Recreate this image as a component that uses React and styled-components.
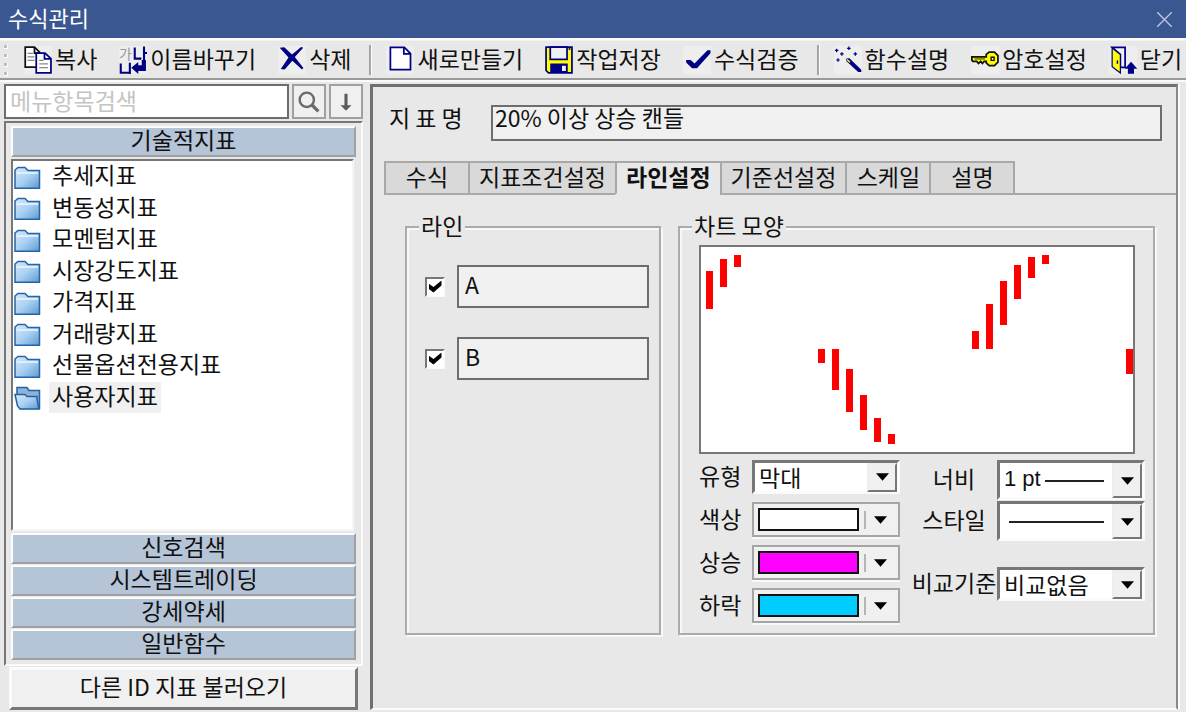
import React, { useState } from "react"
import styled, { createGlobalStyle } from "styled-components"

const GlobalStyle = createGlobalStyle`
  * {
    box-sizing: border-box;
  }
  body {
    margin: 0;
    background: #e8e8e8;
  }
  body, button, input, select {
    font-family: "Noto Sans CJK KR", "Liberation Sans", sans-serif;
    font-size: 23px;
    line-height: 28px;
    color: #111;
  }
`

const navy = "#000084"

/* toolbar icons */

const CopyIcon = () => (
  <Icon viewBox="0 0 16 16">
    <path d="M.7.7H6l3 3V12H.7z" fill="#fff" stroke="#111" />
    <path d="M6 .7V4h3" fill="none" stroke="#111" />
    <path d="M2 4.2h3M2 6.2h4M2 8.2h4" stroke="#888" strokeWidth=".7" />
    <path d="M7 4h5l3.4 3.2v8.2H7z" fill="#fff" stroke={navy} />
    <path d="M11.7 4v3.4h3.6" fill="none" stroke={navy} />
    <path d="M8.7 8.2h2.5M8.7 10.2h5M8.7 12.4h5" stroke="#888" strokeWidth=".7" />
  </Icon>
)

const RenameIcon = () => (
  <Icon viewBox="0 0 16 16">
    <text x="0" y="7.4" fontSize="8" fill="#999">가</text>
    <path d="M9 .8v6.4h3.8M14.3.3v8.4M14 4h2M1 10v5.3h4.6M6.2 9.5V16" fill="none" stroke={navy} strokeWidth="1.2" />
    <path d="M15.4 8v6.3H11V16l-4-3.6 4-3.3V11h2V8z" fill={navy} />
  </Icon>
)

const DeleteIcon = () => (
  <Icon viewBox="0 0 16 16">
    <path d="M1 1l2.6-.3 4.4 4.1L13.200.6l1.200.4L9.600 6.300l4.900 6.300-.8.8-5.500-5-4.400 5-2.200-.2L6 6.600z" fill={navy} />
  </Icon>
)

const NewIcon = () => (
  <Icon viewBox="0 0 16 16">
    <path d="M2.5.8h8L14 4.3v9.2H2.5z" fill="#fff" stroke={navy} />
    <path d="M10.2.8v3.7H14" fill="none" stroke={navy} />
  </Icon>
)

const SaveIcon = () => (
  <Icon viewBox="0 0 16 16">
    <path d="M.6.6h14.8v14.8H2L.6 14z" fill="#ff0" stroke={navy} />
    <path d="M3 .6h9.6v7H3z" fill="#f0f0f0" stroke={navy} />
    <path d="M3 10h10v5.4H3z" fill={navy} />
    <path d="M9.7 11.3h2.2v3H9.7z" fill="#f0f0f0" />
    <path d="M13.5 1.7h1" stroke={navy} />
  </Icon>
)

const CheckIcon = () => (
  <Icon viewBox="0 0 16 16">
    <path d="M1.800 8h2.600l2.200 2 7.400-7.600h1.700v1.800L8 12.700H5.200L1.800 9.400z" fill={navy} />
  </Icon>
)

const WandIcon = () => (
  <Icon viewBox="0 0 16 16">
    <path d="M7 7.2l1.8-.2 6.8 6.6v1.2h-1.8L7 8.6z" fill={navy} />
    <path d="M7.4 7.7l1.7 1.6" stroke="#ff0" strokeWidth=".9" />
    <path
      d="M.5 2.5h2M1.5 1.5v2M7.5 1.3h2M8.5.3v2M3.5 4.5h2M4.5 3.5v2M11.2 4.5h2M12.2 3.5v2M1.3 8h2M2.3 7v2"
      stroke={navy}
      strokeWidth=".7"
    />
  </Icon>
)

const KeyIcon = () => (
  <Icon viewBox="0 0 16 16">
    <path
      d="M.5 6.2h8.2V4.8l1.7-1.3h3l2 2v3.7l-2 2h-3L8.7 9.7v-.9H7.5L6.5 10l-1-1.2L4.3 10l-1-1.2H1L.5 8z"
      fill="#ff0"
      stroke="#111"
    />
    <path d="M2 7.4h6" stroke="#111" strokeWidth=".5" />
    <path d="M11.5 6.4h1.7v1.8h-1.7z" fill="#fff" stroke="#111" strokeWidth=".8" />
  </Icon>
)

const DoorIcon = () => (
  <Icon viewBox="0 0 16 16">
    <path d="M1.8.8h7.4v11.4H6.5V5L1.8.8z" fill="#f0f0f0" stroke={navy} />
    <path d="M1.8 1.2l4.7 3.6v10.6l-4.7-3.6z" fill="#ff0" stroke={navy} strokeWidth=".7" />
    <path d="M4.8 8.2v2" stroke={navy} strokeWidth=".8" />
    <path d="M12.6 9l3.6 4h-1.9v2.8h-3.5V13H9z" fill={navy} />
  </Icon>
)

const SearchIcon = () => (
  <SmallIcon viewBox="0 0 20 20">
    <circle cx="8" cy="8" r="6.5" fill="none" stroke="#6b6b6b" strokeWidth="2.2" />
    <path d="M12.5 12.5l6 6" stroke="#6b6b6b" strokeWidth="3" />
  </SmallIcon>
)

const DownIcon = () => (
  <SmallIcon viewBox="0 0 20 20">
    <path d="M8.6 2.5h2.8V13H15l-5 5-5-5h3.6z" fill="#5c5c5c" />
  </SmallIcon>
)

const FolderIcon = ({ open }) => (
  <FolderSvg viewBox="0 0 27 24">
    <defs>
      <linearGradient id="folder" x1="0" y1="0" x2="1" y2="1">
        <stop offset="0" stopColor="#d5eafc" />
        <stop offset=".5" stopColor="#a9d0f3" />
        <stop offset="1" stopColor="#5f98cf" />
      </linearGradient>
    </defs>
    {open ? (
      <>
        <path d="M3 1.500h10l2 3h10.500v18H6L3 10z" fill="#8fb2d8" stroke="#2262a3" strokeWidth="1.5" />
        <path d="M1 8.500h10l2 2h10v3l2 9.500H6L3.500 20z" fill="url(#folder)" stroke="#2262a3" strokeWidth="1.5" />
      </>
    ) : (
      <>
        <path d="M1 4l3-2.5h7l3 3h11.500v17.800H1z" fill="url(#folder)" stroke="#2465aa" strokeWidth="1.5" />
        <path d="M2.5 7h21.500" stroke="#eef7ff" strokeWidth="1.5" />
      </>
    )}
  </FolderSvg>
)

const Arrow = () => (
  <ArrowSvg viewBox="0 0 14 8">
    <path d="M0 0h14L7 8z" fill="#000" />
  </ArrowSvg>
)

const toolGroups = [
  [
    { label: "복사", icon: <CopyIcon /> },
    { label: "이름바꾸기", icon: <RenameIcon /> },
    { label: "삭제", icon: <DeleteIcon /> },
  ],
  [
    { label: "새로만들기", icon: <NewIcon /> },
    { label: "작업저장", icon: <SaveIcon /> },
    { label: "수식검증", icon: <CheckIcon /> },
  ],
  [
    { label: "함수설명", icon: <WandIcon /> },
    { label: "암호설정", icon: <KeyIcon /> },
    { label: "닫기", icon: <DoorIcon /> },
  ],
]

const folders = [
  "추세지표",
  "변동성지표",
  "모멘텀지표",
  "시장강도지표",
  "가격지표",
  "거래량지표",
  "선물옵션전용지표",
  "사용자지표",
]

const categories = ["신호검색", "시스템트레이딩", "강세약세", "일반함수"]

const tabs = ["수식", "지표조건설정", "라인설정", "기준선설정", "스케일", "설명"]

const colors = [
  { label: "색상", id: "base-color", value: "#ffffff" },
  { label: "상승", id: "up-color", value: "#ff00ff" },
  { label: "하락", id: "down-color", value: "#00ccff" },
]

// x, top, bottom
const bars = [
  [5, 24, 62],
  [19, 12, 40],
  [33, 8, 20],
  [117, 102, 116],
  [131, 102, 143],
  [145, 122, 165],
  [159, 148, 183],
  [173, 171, 195],
  [187, 187, 197],
  [271, 84, 102],
  [285, 57, 102],
  [299, 34, 78],
  [313, 18, 52],
  [327, 10, 31],
  [341, 8, 17],
  [425, 102, 127],
]

const Toolbar = () => (
  <ToolbarRow role="toolbar">
    <Grip><i /><i /><i /><i /></Grip>
    {toolGroups.map((group, i) => (
      <React.Fragment key={i}>
        {i > 0 && <Separator />}
        <ToolGroup>
          {group.map(tool => (
            <ToolButton type="button" key={tool.label}>
              {tool.icon}
              <ToolLabel>{tool.label}</ToolLabel>
            </ToolButton>
          ))}
        </ToolGroup>
      </React.Fragment>
    ))}
  </ToolbarRow>
)

const Sidebar = () => {
  const [selected, setSelected] = useState("사용자지표")
  return (
    <SidebarColumn>
      <SearchRow>
        <SearchInput type="text" placeholder="메뉴항목검색" aria-label="메뉴항목검색" />
        <SearchButton type="button" aria-label="검색"><SearchIcon /></SearchButton>
        <SearchButton type="button" aria-label="다음"><DownIcon /></SearchButton>
      </SearchRow>
      <TreePanel>
        <Category type="button">기술적지표</Category>
        <TreeBox>
          <TreeList>
            {folders.map(name => (
              <TreeItem key={name}>
                <TreeButton type="button" onClick={() => setSelected(name)}>
                  <FolderIcon open={selected === name} />
                  <TreeLabel $selected={selected === name}>{name}</TreeLabel>
                </TreeButton>
              </TreeItem>
            ))}
          </TreeList>
        </TreeBox>
        <CategoryStack>
          {categories.map(name => (
            <Category type="button" key={name}>{name}</Category>
          ))}
        </CategoryStack>
      </TreePanel>
      <LoadButton type="button">다른 ID 지표 불러오기</LoadButton>
    </SidebarColumn>
  )
}

const LineSettings = () => (
  <Group>
    <Legend>라인</Legend>
    <LineList>
      {["A", "B"].map(name => (
        <LineRow key={name}>
          <CheckBox type="checkbox" defaultChecked aria-label={name} />
          <LineName type="text" defaultValue={name} aria-label={`라인 ${name}`} />
        </LineRow>
      ))}
    </LineList>
  </Group>
)

const ChartSettings = () => (
  <Group>
    <Legend>차트 모양</Legend>
    <ChartBody>
      <Chart viewBox="0 0 432 205" preserveAspectRatio="none">
        {bars.map(([x, top, bottom]) => (
          <rect key={x} x={x} y={top} width="7" height={bottom - top} fill="#f00" />
        ))}
      </Chart>
      <Options>
        <OptionColumn>
          <OptionRow>
            <OptionLabel htmlFor="type">유형</OptionLabel>
            <SelectBox>
              <Select id="type"><option>막대</option></Select>
              <SelectArrow><Arrow /></SelectArrow>
            </SelectBox>
          </OptionRow>
          {colors.map(color => (
            <OptionRow key={color.id}>
              <OptionLabel htmlFor={color.id}>{color.label}</OptionLabel>
              <ColorButton type="button" id={color.id} aria-haspopup="listbox">
                <Swatch $color={color.value} />
                <ColorArrow><Arrow /></ColorArrow>
              </ColorButton>
            </OptionRow>
          ))}
        </OptionColumn>
        <OptionColumnRight>
          <WideRow>
            <WideLabel htmlFor="width">너비</WideLabel>
            <SelectBox $tall>
              <WidthSelect id="width"><option>1 pt</option></WidthSelect>
              <LineSample $from={48} />
              <SelectArrow><Arrow /></SelectArrow>
            </SelectBox>
          </WideRow>
          <WideRow>
            <WideLabel htmlFor="style">스타일</WideLabel>
            <SelectBox $tall>
              <Select id="style"><option value="solid" aria-label="실선"></option></Select>
              <LineSample $from={12} />
              <SelectArrow><Arrow /></SelectArrow>
            </SelectBox>
          </WideRow>
          <CompareRow>
            <WideLabel htmlFor="compare">비교기준</WideLabel>
            <SelectBox>
              <Select id="compare"><option>비교없음</option></Select>
              <SelectArrow><Arrow /></SelectArrow>
            </SelectBox>
          </CompareRow>
        </OptionColumnRight>
      </Options>
    </ChartBody>
  </Group>
)

const Editor = () => {
  const [active, setActive] = useState("라인설정")
  return (
    <EditorPanel>
      <NameRow>
        <NameLabel htmlFor="name">지 표 명</NameLabel>
        <NameInput id="name" type="text" defaultValue="20% 이상 상승 캔들" />
      </NameRow>
      <TabRow role="tablist">
        {tabs.map(tab => (
          <Tab
            key={tab}
            type="button"
            role="tab"
            aria-selected={tab === active}
            $active={tab === active}
            onClick={() => setActive(tab)}
          >
            {tab}
          </Tab>
        ))}
        <TabFill />
      </TabRow>
      <TabBody>
        <LineSettings />
        <ChartSettings />
      </TabBody>
    </EditorPanel>
  )
}

const App = () => {
  return (
    <Window>
      <GlobalStyle />
      <TitleBar>
        <Title>수식관리</Title>
        <CloseButton type="button" aria-label="닫기">
          <CloseSvg viewBox="0 0 14 14">
            <path d="M0 0l14 14M14 0L0 14" stroke="#b9c6de" strokeWidth="1.3" />
          </CloseSvg>
        </CloseButton>
      </TitleBar>
      <Toolbar />
      <Content>
        <Sidebar />
        <Editor />
      </Content>
    </Window>
  )
}

export default App

const Window = styled.div`
  display: flex;
  flex-direction: column;
  min-height: 100vh;
  background: #e8e8e8;
`

const TitleBar = styled.header`
  display: flex;
  align-items: center;
  justify-content: space-between;
  height: 38px;
  padding: 0 14px 0 8px;
  background: #3a5791;
`

const Title = styled.h1`
  margin: 0;
  padding-bottom: 4px;
  font-size: 22px;
  font-weight: 400;
  color: #fff;
`

const CloseButton = styled.button`
  display: flex;
  padding: 0;
  border: 0;
  background: none;
`

const CloseSvg = styled.svg`
  width: 15px;
  height: 15px;
`

const ToolbarRow = styled.div`
  display: flex;
  align-items: center;
  height: 44px;
  padding-left: 4px;
  border-top: 2px solid #fafafa;
  border-bottom: 2px solid #fafafa;
  box-shadow: inset 0 -2px 0 #9a9a9a, inset 0 1px 0 #f2f2f2;
  overflow: hidden;
`

const Grip = styled.span`
  display: flex;
  flex-direction: column;
  gap: 5px;
  width: 20px;

  i {
    width: 4px;
    height: 4px;
    background: #bdbdbd;
    border-right: 1px solid #fff;
    border-bottom: 1px solid #fff;
  }
`

const ToolGroup = styled.div`
  display: flex;
  gap: 22px;
`

const ToolButton = styled.button`
  display: flex;
  align-items: center;
  gap: 3px;
  padding: 0;
  border: 0;
  background: none;
  white-space: nowrap;
`

const ToolLabel = styled.span`
  padding-bottom: 4px;
`

const Icon = styled.svg`
  width: 28px;
  height: 28px;
  flex: none;
  background: #eee;
  overflow: visible;
`

const SmallIcon = styled.svg`
  width: 22px;
  height: 22px;
`

const Separator = styled.span`
  width: 3px;
  height: 30px;
  margin: 0 14px 0 18px;
  border-left: 2px solid #a5a5a5;
  border-right: 1px solid #fff;
`

const Content = styled.main`
  display: grid;
  grid-template-columns: 363px minmax(0, 1fr);
  gap: 7px;
  flex: 1;
  padding: 2px 6px 2px 0;
`

const SidebarColumn = styled.aside`
  display: flex;
  flex-direction: column;
  padding-left: 4px;
`

const SearchRow = styled.div`
  display: flex;
  gap: 3px;
  height: 35px;
  margin-bottom: 2px;
`

const SearchInput = styled.input`
  flex: 1;
  min-width: 0;
  padding: 0 4px 4px 4px;
  border: 2px solid #6d6d6d;
  background: #fff;

  &::placeholder {
    color: #c4c4c4;
    opacity: 1;
  }
`

const SearchButton = styled.button`
  display: flex;
  align-items: center;
  justify-content: center;
  width: 34px;
  padding: 0;
  border: 2px solid #a0a0a0;
  background: #f0f0f0;
`

const TreePanel = styled.section`
  display: flex;
  flex-direction: column;
  flex: 1;
  padding: 3px 5px 4px 5px;
  border: 2px solid #fbfbfb;
  border-top-color: #777;
  border-left-color: #777;
`

const Category = styled.button`
  height: 31px;
  padding: 0 0 5px 0;
  border: 2px solid #a0a0a0;
  border-top-color: #fbfbfb;
  border-left-color: #fbfbfb;
  background: #b5c4d7;
  line-height: 22px;
`

const CategoryStack = styled.div`
  display: flex;
  flex-direction: column;
  gap: 1px;
`

const TreeBox = styled.div`
  flex: 1;
  margin: 2px 2px 2px 0;
  border: 2px solid #f5f5f5;
  border-top-color: #777;
  border-left-color: #777;
  background: #fff;
`

const TreeList = styled.ul`
  display: flex;
  flex-direction: column;
  justify-content: space-between;
  height: 252px;
  margin: 0;
  padding: 0 0 0 1px;
  list-style: none;
`

const TreeItem = styled.li`
  display: flex;
`

const TreeButton = styled.button`
  display: flex;
  align-items: center;
  gap: 8px;
  height: 31px;
  padding: 0;
  border: 0;
  background: none;
  text-align: left;
`

const FolderSvg = styled.svg`
  width: 27px;
  height: 24px;
  margin-top: 2px;
`

const TreeLabel = styled.span`
  padding: 0 3px 5px 3px;
  line-height: 26px;
  background: ${props => (props.$selected ? "#f0f0f0" : "none")};
`

const LoadButton = styled.button`
  height: 43px;
  margin: 1px 5px 0 5px;
  padding: 0 0 6px 0;
  border: 3px solid #777;
  border-top-color: #fbfbfb;
  border-left-color: #fbfbfb;
  background: #f0f0f0;
`

const EditorPanel = styled.section`
  border: 3px solid #707070;
  border-right: 2px solid #8a8a8a;
  border-bottom: 2px solid #fbfbfb;
  box-shadow: 2px 0 0 #fbfbfb;
  margin-right: 2px;
`

const NameRow = styled.div`
  display: flex;
  padding: 18px 14px 20px 16px;
`

const NameLabel = styled.label`
  width: 102px;
  flex: none;
  line-height: 24px;
`

const NameInput = styled.input`
  flex: 1;
  min-width: 0;
  height: 36px;
  padding: 0 2px 12px 2px;
  border: 2px solid #6d6d6d;
  background: #f0f0f0;
`

const TabRow = styled.div`
  display: flex;
  padding-left: 11px;
`

const Tab = styled.button`
  min-width: 84px;
  height: 34px;
  padding: 0 9px 4px 9px;
  border: 2px solid #a8a8a8;
  border-right-width: 0;
  border-bottom-color: ${props => (props.$active ? "#e8e8e8" : "#a8a8a8")};
  background: ${props => (props.$active ? "#e8e8e8" : "#d9d9d9")};
  font-weight: ${props => (props.$active ? 700 : 400)};
  line-height: 26px;
  white-space: nowrap;
`

const TabFill = styled.span`
  flex: 1;
  border-bottom: 2px solid #a8a8a8;
  border-left: 2px solid #a8a8a8;
`

const TabBody = styled.div`
  display: grid;
  grid-template-columns: minmax(0, 256fr) minmax(0, 477fr);
  gap: 17px;
  padding: 17px 21px 0 32px;
`

const Group = styled.fieldset`
  min-width: 0;
  margin: 0;
  padding: 0 8px 6px 18px;
  border: 2px solid #ababab;
  box-shadow: 2px 2px 0 #f8f8f8, inset 2px 2px 0 #f8f8f8;
`

const Legend = styled.legend`
  height: 30px;
  margin-left: -6px;
  padding: 0 2px;
  line-height: 26px;
  background: #e8e8e8;
`

const LineList = styled.div`
  display: flex;
  flex-direction: column;
  gap: 29px;
  padding-top: 23px;
`

const LineRow = styled.div`
  display: flex;
  align-items: center;
  gap: 12px;
`

const CheckBox = styled.input`
  appearance: none;
  display: grid;
  place-items: center;
  flex: none;
  width: 20px;
  height: 20px;
  margin: 0;
  border: 2px solid #fbfbfb;
  border-top-color: #777;
  border-left-color: #777;
  background: #fff;

  &:checked::before {
    content: "";
    width: 13px;
    height: 12px;
    background: #000;
    clip-path: polygon(0 25%, 38% 55%, 100% 0, 100% 42%, 38% 100%, 0 68%);
  }
`

const LineName = styled.input`
  flex: 1;
  min-width: 0;
  height: 43px;
  margin-right: 2px;
  padding: 0 6px 6px 6px;
  border: 2px solid #6d6d6d;
  background: #f0f0f0;
`

const ChartBody = styled.div`
  padding: 3px 0 0 1px;
`

const Chart = styled.svg`
  display: block;
  width: calc(100% - 10px);
  height: 209px;
  border: 2px solid #777;
  background: #fff;
`

const Options = styled.div`
  display: flex;
  justify-content: space-between;
`

const OptionColumn = styled.div`
  padding-top: 1px;
`

const OptionColumnRight = styled.div`
  display: flex;
  flex-direction: column;
  gap: 1px;
  padding-top: 6px;
`

const OptionRow = styled.div`
  display: flex;
  align-items: center;
  height: 43px;
`

const WideRow = styled.div`
  display: flex;
  align-items: center;
`

const CompareRow = styled(WideRow)`
  margin-top: 25px;
`

const OptionLabel = styled.label`
  width: 53px;
  padding-bottom: 3px;
`

const WideLabel = styled.label`
  width: 86px;
  padding-bottom: 4px;
  text-align: center;
  white-space: nowrap;
`

const SelectBox = styled.div`
  position: relative;
  width: 148px;
  height: ${props => (props.$tall ? 40 : 34)}px;
`

const Select = styled.select`
  appearance: none;
  width: 100%;
  height: 100%;
  padding: 0 32px 2px 4px;
  border: 3px solid #fbfbfb;
  border-top-color: #777;
  border-left-color: #777;
  border-radius: 0;
  background: #fff;
`

const WidthSelect = styled(Select)`
  font-family: "Liberation Sans", "Noto Sans CJK KR", sans-serif;
  font-size: 22px;
`

const SelectArrow = styled.span`
  position: absolute;
  top: 3px;
  right: 3px;
  bottom: 2px;
  display: flex;
  align-items: center;
  justify-content: center;
  width: 30px;
  border: 2px solid #777;
  border-top-color: #eee;
  border-left-color: #eee;
  background: #f0f0f0;
  pointer-events: none;
`

const LineSample = styled.span`
  position: absolute;
  top: 50%;
  left: ${props => props.$from}px;
  right: 41px;
  height: 2px;
  background: #222;
  pointer-events: none;
`

const ArrowSvg = styled.svg`
  width: 13px;
  height: 8px;
`

const ColorButton = styled.button`
  display: flex;
  align-items: center;
  width: 148px;
  height: 35px;
  padding: 0 4px;
  border: 2px solid #a5a5a5;
  background: #f0f0f0;
  box-shadow: 0 2px 0 #f8f8f8;
`

const Swatch = styled.span`
  flex: 1;
  height: 23px;
  border: 2px solid #111;
  background: ${props => props.$color};
`

const ColorArrow = styled.span`
  display: flex;
  align-items: center;
  justify-content: center;
  width: 30px;
  height: 18px;
  margin-left: 5px;
  border-left: 2px solid #b5b5b5;
`
